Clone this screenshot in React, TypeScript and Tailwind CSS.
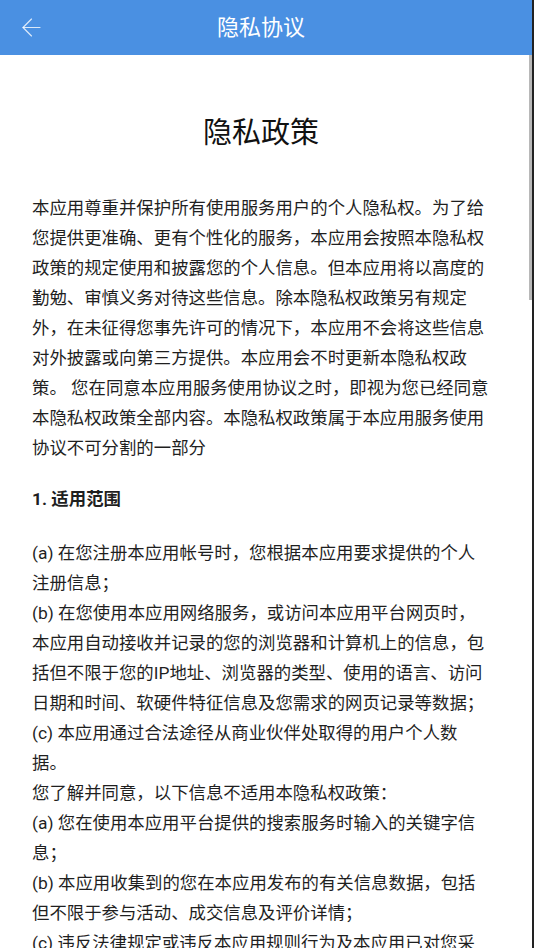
import { ArrowLeft } from "lucide-react";

const intro =
  "本应用尊重并保护所有使用服务用户的个人隐私权。为了给您提供更准确、更有个性化的服务，本应用会按照本隐私权政策的规定使用和披露您的个人信息。但本应用将以高度的勤勉、审慎义务对待这些信息。除本隐私权政策另有规定外，在未征得您事先许可的情况下，本应用不会将这些信息对外披露或向第三方提供。本应用会不时更新本隐私权政策。 您在同意本应用服务使用协议之时，即视为您已经同意本隐私权政策全部内容。本隐私权政策属于本应用服务使用协议不可分割的一部分";

const scope = [
  "(a) 在您注册本应用帐号时，您根据本应用要求提供的个人注册信息；",
  "(b) 在您使用本应用网络服务，或访问本应用平台网页时，本应用自动接收并记录的您的浏览器和计算机上的信息，包括但不限于您的IP地址、浏览器的类型、使用的语言、访问日期和时间、软硬件特征信息及您需求的网页记录等数据；",
  "(c) 本应用通过合法途径从商业伙伴处取得的用户个人数据。",
  "您了解并同意，以下信息不适用本隐私权政策：",
  "(a) 您在使用本应用平台提供的搜索服务时输入的关键字信息；",
  "(b) 本应用收集到的您在本应用发布的有关信息数据，包括但不限于参与活动、成交信息及评价详情；",
  "(c) 违反法律规定或违反本应用规则行为及本应用已对您采取的措施。",
];

export default function App() {
  return (
    <div
      className="flex h-[948px] w-full overflow-hidden bg-white"
      style={{ fontFamily: "Roboto, 'Noto Sans CJK SC', sans-serif" }}
    >
      <div className="relative flex min-w-0 flex-1 flex-col">
        <header className="flex h-[55px] shrink-0 items-center bg-[#4a90e2] pl-[17px] pr-[10px]">
          <button className="text-white/80">
            <ArrowLeft size={29} strokeWidth={1} />
          </button>
          <h1 className="flex-1 pr-[46px] text-center text-[22px] text-white">隐私协议</h1>
        </header>

        {/* scrollbar thumb */}
        <div className="absolute right-0 top-[55px] h-[245px] w-[3px] bg-[#b8b8b8]" />

        <main className="pl-[32px] pr-[42px] text-[17.4px] leading-[30px] text-[#1f1f1f]">
          <h2 className="mt-[58px] text-center text-[29px] leading-[40px] text-[#111]">隐私政策</h2>
          <p className="mt-[40px]">{intro}</p>
          <h3 className="mt-[21px] font-bold">1. 适用范围</h3>
          <div className="mt-[24px]">
            {scope.map((line) => (
              <p key={line}>{line}</p>
            ))}
          </div>
        </main>
      </div>
      <div className="w-[2px] shrink-0 bg-[#222]" />
    </div>
  );
}
